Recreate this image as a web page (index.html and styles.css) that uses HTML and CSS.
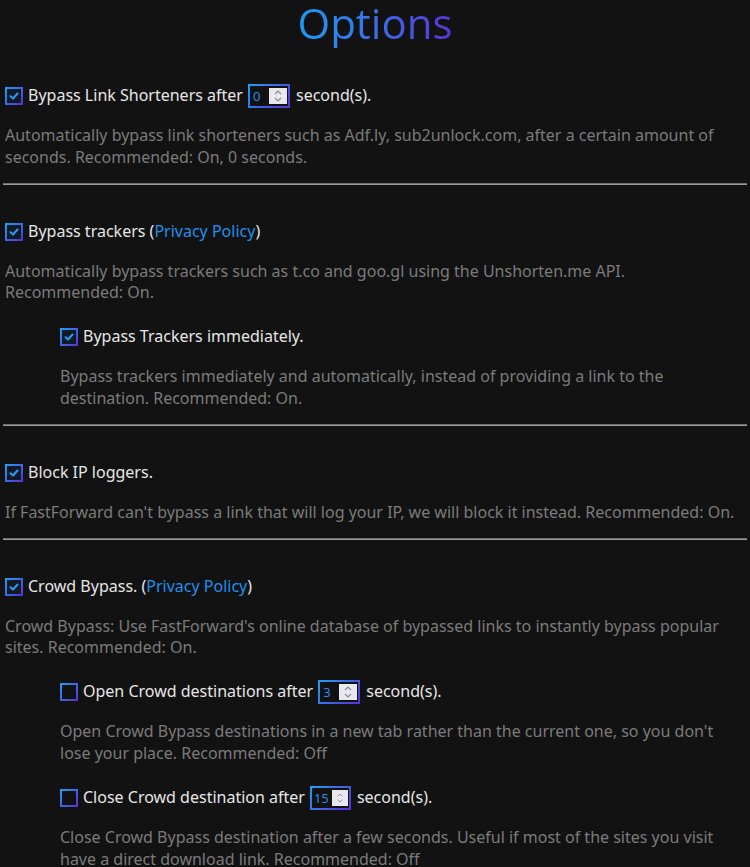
FILE: index.html
```html
<!DOCTYPE html>
<html>
<head>
<meta charset="utf-8">
<link rel="stylesheet" href="styles.css">
</head>
<body>
<h1 class="title">Options</h1>

<section class="opt first">
  <div class="row">
    <span class="cb on"><svg viewBox="0 0 14 14"><path d="M3.5 7.2 L6 9.5 L10.5 4.5" /></svg></span>
    <span class="label">Bypass Link Shorteners after</span>
    <span class="num"><span class="val">0</span><span class="spin"><svg viewBox="0 0 10 16"><path d="M2 6 L5 3 L8 6 M2 10 L5 13 L8 10"/></svg></span></span>
    <span class="label">second(s).</span>
  </div>
  <p class="desc">Automatically bypass link shorteners such as Adf.ly, sub2unlock.com, after a certain amount of seconds. Recommended: On, 0 seconds.</p>
</section>
<hr class="sep">

<section class="opt">
  <div class="row">
    <span class="cb on"><svg viewBox="0 0 14 14"><path d="M3.5 7.2 L6 9.5 L10.5 4.5" /></svg></span>
    <span class="label">Bypass trackers (<a class="link">Privacy Policy</a>)</span>
  </div>
  <p class="desc">Automatically bypass trackers such as t.co and goo.gl using the Unshorten.me API. Recommended: On.</p>
  <div class="sub">
    <div class="row">
      <span class="cb on"><svg viewBox="0 0 14 14"><path d="M3.5 7.2 L6 9.5 L10.5 4.5" /></svg></span>
      <span class="label">Bypass Trackers immediately.</span>
    </div>
    <p class="desc">Bypass trackers immediately and automatically, instead of providing a link to the destination. Recommended: On.</p>
  </div>
</section>
<hr class="sep">

<section class="opt">
  <div class="row">
    <span class="cb on"><svg viewBox="0 0 14 14"><path d="M3.5 7.2 L6 9.5 L10.5 4.5" /></svg></span>
    <span class="label">Block IP loggers.</span>
  </div>
  <p class="desc">If FastForward can't bypass a link that will log your IP, we will block it instead. Recommended: On.</p>
</section>
<hr class="sep">

<section class="opt">
  <div class="row">
    <span class="cb on"><svg viewBox="0 0 14 14"><path d="M3.5 7.2 L6 9.5 L10.5 4.5" /></svg></span>
    <span class="label">Crowd Bypass. (<a class="link">Privacy Policy</a>)</span>
  </div>
  <p class="desc">Crowd Bypass: Use FastForward's online database of bypassed links to instantly bypass popular sites. Recommended: On.</p>
  <div class="sub">
    <div class="row">
      <span class="cb"></span>
      <span class="label">Open Crowd destinations after</span>
      <span class="num"><span class="val">3</span><span class="spin"><svg viewBox="0 0 10 16"><path d="M2 6 L5 3 L8 6 M2 10 L5 13 L8 10"/></svg></span></span>
      <span class="label">second(s).</span>
    </div>
    <p class="desc">Open Crowd Bypass destinations in a new tab rather than the current one, so you don't lose your place. Recommended: Off</p>
    <div class="row">
      <span class="cb"></span>
      <span class="label">Close Crowd destination after</span>
      <span class="num narrow"><span class="val">15</span><span class="spin"><svg viewBox="0 0 10 16"><path d="M2 6 L5 3 L8 6 M2 10 L5 13 L8 10"/></svg></span></span>
      <span class="label">second(s).</span>
    </div>
    <p class="desc">Close Crowd Bypass destination after a few seconds. Useful if most of the sites you visit have a direct download link. Recommended: Off</p>
  </div>
</section>
</body>
</html>
```
FILE: styles.css
```css
html, body {
  margin: 0;
  background: #121212;
}
body {
  padding: 0 5px;
  font-family: "Noto Sans", "Open Sans", sans-serif;
  font-size: 16px;
  line-height: 21.8px;
  color: #e6e6e6;
}
.title {
  width: max-content;
  margin: -2px auto 0;
  font-family: "Open Sans", "Noto Sans", sans-serif;
  font-weight: 400;
  font-size: 42px;
  line-height: 50px;
  background: linear-gradient(90deg, #1e9af2 0%, #3a6ee8 50%, #5a35d8 100%);
  -webkit-background-clip: text;
  background-clip: text;
  color: transparent;
}
.opt {
  padding-top: 36px;
  padding-bottom: 14px;
}
.opt.first {
  padding-top: 37px;
}
.row {
  display: flex;
  align-items: center;
  gap: 5px;
  height: 22px;
}
.cb {
  width: 18px;
  height: 18px;
  box-sizing: border-box;
  padding: 2px;
  background: linear-gradient(135deg, #1fa0f4, #5a2fd6);
  display: inline-flex;
  position: relative;
  flex: none;
}
.cb::before {
  content: "";
  position: absolute;
  inset: 2px;
  background: #121a28;
}
.cb:not(.on)::before {
  background: #121212;
}
.cb svg {
  position: relative;
  width: 14px;
  height: 14px;
  fill: none;
  stroke: #2a9df0;
  stroke-width: 2;
  stroke-linecap: round;
  stroke-linejoin: round;
}
.label {
  white-space: nowrap;
}
.link {
  color: #1e90f0;
  text-decoration: none;
}
.num {
  display: inline-flex;
  width: 42px;
  height: 24px;
  box-sizing: border-box;
  padding: 2px;
  background: linear-gradient(135deg, #1fa0f4, #5a2fd6);
  margin-right: 1px;
  flex: none;
}
.num.narrow {
  width: 41px;
}
.val {
  flex: 1;
  background: #121212;
  color: #2a8ae8;
  font-size: 13px;
  line-height: 20px;
  padding-left: 3px;
}
.num .spin {
  width: 18px;
  background: #121212;
  display: flex;
  align-items: center;
  justify-content: flex-end;
  padding-right: 1px;
}
.spin svg {
  width: 18px;
  height: 16px;
  background: #e9e8ee;
  fill: none;
  stroke: #8a8a8f;
  stroke-width: 1.1;
  padding: 0 4px;
  box-sizing: border-box;
}
.narrow .val {
  padding-left: 2px;
}
.narrow .spin {
  width: 16px;
}
.desc {
  margin: 18px 0 0;
  color: #7b7b7b;
}
.sub {
  padding-left: 55px;
}
.sub .row {
  margin-top: 22px;
}
.sep {
  margin: 0 -2px;
  border: none;
  border-top: 1px solid #6e6e6e;
  border-bottom: 1px solid #9a9a9a;
  height: 0;
}
```
